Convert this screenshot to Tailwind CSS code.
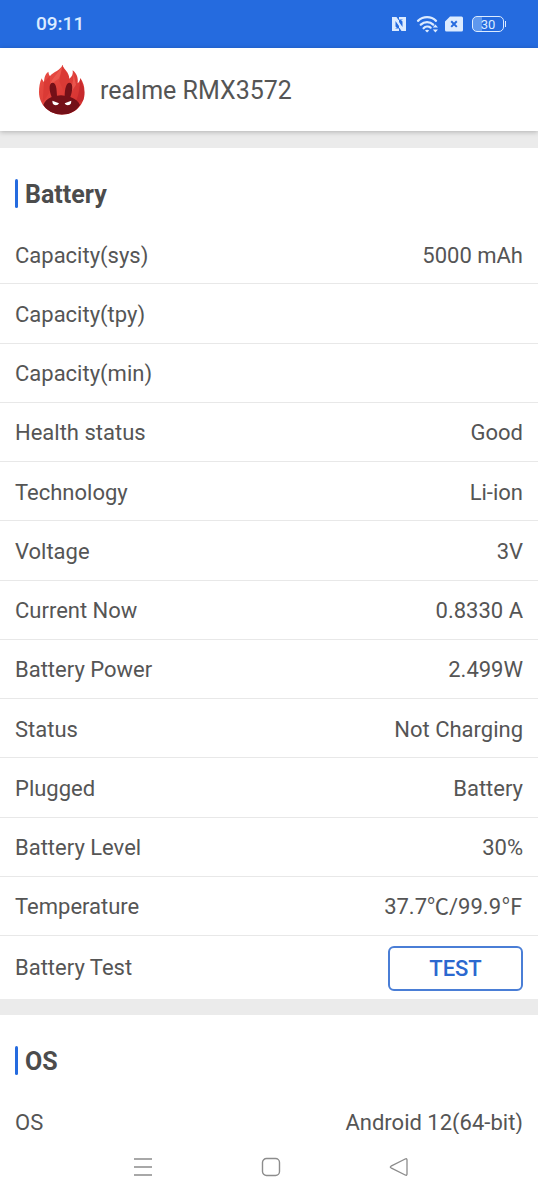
<!DOCTYPE html>
<html lang="en">
<head>
    <meta charset="UTF-8">
    <meta name="viewport" content="width=device-width, initial-scale=1.0">
    <title>Device Info</title>
    <script src="https://cdn.jsdelivr.net/npm/@tailwindcss/browser@4"></script>
</head>
<body class="h-screen flex flex-col overflow-hidden bg-white font-['Roboto','Noto_Sans_CJK_SC',sans-serif] text-[22px] leading-7 text-[#555]">

    <!-- Status bar -->
    <div class="h-12 shrink-0 bg-[#256bdf] text-[#dcebff] flex items-center justify-between pl-9 pr-8">
        <span class="text-[19px] font-medium">09:11</span>
        <div class="flex items-center gap-[9px]">
            <svg class="w-4 h-4" viewBox="0 0 16 16" aria-label="NFC">
                <path fill="currentColor" fill-rule="evenodd" d="M1 1h4.500l2 3H10l1.500 1.500V1H15v14h-4.500l-2-3H6l-1.500-1.500V15H1zM4.500 5v7.500H8V10zM11.500 11V3.500H8V6z"/>
                <path fill="currentColor" d="M8 1h7v2H8zM1 13h7v2H1z"/>
            </svg>
            <svg class="w-[23px] h-[18px]" viewBox="0 0 23 18" fill="none" stroke="currentColor" stroke-width="2.300" stroke-linecap="round" aria-label="Wi-Fi">
                <path d="M2 5.800c5.300-4.800 13-4.800 18 0M4.800 9.600c3.600-3.300 9-3.300 12.400 0M7.600 13.200c1.900-1.900 5-2.100 7-.6"/>
                <path fill="currentColor" stroke="none" d="M9 15.400c1.200-1 3-1 4.200 0l-2.100 2.200zM16.800 12.600l2.600-3 2.600 3zM16.800 14.400H22l-2.600 3z"/>
            </svg>
            <svg class="w-[18px] h-4 -ml-[3px]" viewBox="0 0 18 16" aria-label="No SIM">
                <path fill="currentColor" d="M5 .5h11.500A1.500 1.500 0 0 1 18 2v12a1.500 1.500 0 0 1-1.500 1.500h-15A1.500 1.500 0 0 1 0 14V5.500z"/>
                <path stroke="#256bdf" stroke-width="2" d="M6.200 5.300l5.600 5.600M11.800 5.300l-5.600 5.600"/>
            </svg>
            <div class="flex items-center gap-px">
                <span class="w-8 h-4 rounded-[5px] border border-current bg-[linear-gradient(90deg,#5f98ee_30%,transparent_30%)] flex items-center justify-center text-[13px] leading-none">30</span>
                <span class="w-px h-1.5 bg-current"></span>
            </div>
        </div>
    </div>

    <!-- Header -->
    <header class="relative z-10 h-[83px] shrink-0 bg-white shadow-[0_1px_5px_rgba(0,0,0,0.25)] flex items-center gap-3.5 pl-9">
        <svg class="w-[50px] h-14" viewBox="0 0 150 168" aria-label="AnTuTu">
            <defs>
                <clipPath id="flame">
                    <path d="M80 8c1 14 20 20 20 42 8-5 12-14 10-25 13 10 17 24 15 39 5-4 7-9 8-16 8 12 13 26 13 42 0 39-30 68-68 68S9 129 9 91c0-15 2-29 8-42 2 5 4 8 7 11 1-14 3-23 13-31 1 6 2 9 5 13 11-13 31-17 38-34z"/>
                </clipPath>
                <linearGradient id="fire" x1="0" y1="0" x2="1" y2="1">
                    <stop offset="0" stop-color="#ed5348"/>
                    <stop offset="1" stop-color="#cf2a2b"/>
                </linearGradient>
            </defs>
            <g clip-path="url(#flame)">
                <path fill="url(#fire)" d="M0 0h150v168H0z"/>
                <path fill="#da3a35" d="M24 60L42 42c-2 18 4 29-2 50l-20 30zM80 8c5 20 20 28 20 50L88 98 70 58z"/>
                <path fill="#ef6155" opacity=".7" d="M80 8c-5 17-4 28-12 42L42 68c8-24 29-37 38-60zM110 25c6 24-3 40-4 65l14-22z"/>
                <path fill="#bd2329" opacity=".6" d="M133 48l20 62-40 20c16-26 18-50 20-82z"/>
                <!-- ears and head -->
                <path fill="#741018" d="M47 105c-7-17-10-41 2-43 12 0 13 18 14 39 8-2 16-2 23 0 1-21 4-39 15-39 12 1 8 27 2 43 14 5 25 14 29 24-10 17-30 30-55 30s-45-12-55-30c4-10 12-19 25-24z"/>
            </g>
            <path fill="#fff" d="M49 116l20 8c-3 8-16 8-19 0zM106 116l-20 8c3 8 16 8 19 0z"/>
        </svg>
        <h1 class="pt-0.5 text-[25px] leading-8">realme RMX3572</h1>
    </header>

    <main class="flex-1 overflow-hidden bg-[#ebebeb] pt-[17px] flex flex-col gap-4">
        <section class="shrink-0 bg-white">
            <h2 class="pt-[31px] pb-[15px] px-[15px] flex gap-[7px] text-[25px] leading-[31px] font-bold text-[#4c4c4c]">
                <span class="w-[3px] h-[29px] rounded-sm bg-[#256bdf]"></span>Battery
            </h2>
            <dl class="grid auto-rows-fr min-h-[711px] [&>div]:flex [&>div]:items-center [&>div]:justify-between [&>div]:px-[15px] [&>div]:pt-[3px] [&>div]:border-b [&>div]:border-[#e8e8e8]">
                <div><dt>Capacity(sys)</dt><dd>5000 mAh</dd></div>
                <div><dt>Capacity(tpy)</dt><dd></dd></div>
                <div><dt>Capacity(min)</dt><dd></dd></div>
                <div><dt>Health status</dt><dd>Good</dd></div>
                <div><dt>Technology</dt><dd>Li-ion</dd></div>
                <div><dt>Voltage</dt><dd>3V</dd></div>
                <div><dt>Current Now</dt><dd>0.8330 A</dd></div>
                <div><dt>Battery Power</dt><dd>2.499W</dd></div>
                <div><dt>Status</dt><dd>Not Charging</dd></div>
                <div><dt>Plugged</dt><dd>Battery</dd></div>
                <div><dt>Battery Level</dt><dd>30%</dd></div>
                <div><dt>Temperature</dt><dd>37.7℃/99.9℉</dd></div>
            </dl>
            <div class="h-[63px] pt-px flex items-center justify-between px-[15px]">
                <span id="test-label">Battery Test</span>
                <button type="button" aria-describedby="test-label" class="w-[135px] h-[45px] pt-0.5 rounded-md border-2 border-[#4a7ed6] text-[#2b68cf] font-medium">TEST</button>
            </div>
        </section>

        <section class="flex-1 shrink-0 bg-white">
            <h2 class="pt-[31px] pb-[15px] px-[15px] flex gap-[7px] text-[25px] leading-[31px] font-bold text-[#4c4c4c]">
                <span class="w-[3px] h-[29px] rounded-sm bg-[#256bdf]"></span>OS
            </h2>
            <dl>
                <div class="pt-[17px] px-[15px] flex items-center justify-between"><dt>OS</dt><dd>Android 12(64-bit)</dd></div>
            </dl>
        </section>
    </main>

    <!-- System navigation -->
    <nav class="h-[66px] shrink-0 bg-white text-[#8c8c8c] flex items-center justify-center gap-[108px] pl-1">
        <button type="button" aria-label="Recent apps">
            <svg class="w-5 h-5" viewBox="0 0 20 20" fill="none" stroke="currentColor" stroke-width="1.500"><path d="M1 2h18M1 10h18M1 18h18"/></svg>
        </button>
        <button type="button" aria-label="Home">
            <svg class="w-5 h-5" viewBox="0 0 20 20" fill="none" stroke="currentColor" stroke-width="1.400"><rect x="1.500" y="1.500" width="17" height="17" rx="4"/></svg>
        </button>
        <button type="button" aria-label="Back">
            <svg class="w-5 h-5" viewBox="0 0 20 20" fill="none" stroke="currentColor" stroke-width="1.300" stroke-linejoin="round"><path d="M2 9.200L16.200 2q1.800-.8 1.800 1v14q0 1.800-1.800 1L2 10.800q-1.400-.8 0-1.600z"/></svg>
        </button>
    </nav>
</body>
</html>
